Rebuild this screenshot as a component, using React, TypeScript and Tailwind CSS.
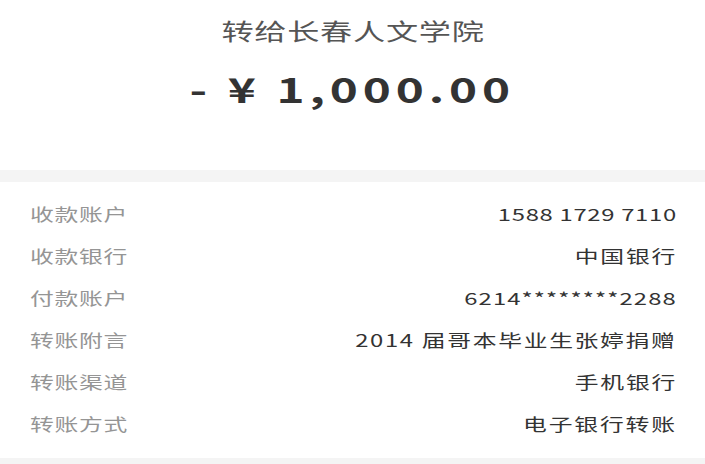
import React from "react";

const rows: [string, string, string][] = [
  ["收款账户", "1588 1729 7110", "tracking-[0.5px]"],
  ["收款银行", "中国银行", "tracking-[1.3px]"],
  ["付款账户", "6214********2288", "tracking-[0.8px]"],
  ["转账附言", "2014 届哥本毕业生张婷捐赠", "tracking-[1.2px]"],
  ["转账渠道", "手机银行", "tracking-[1.3px]"],
  ["转账方式", "电子银行转账", "tracking-[1.3px]"],
];

export default function App() {
  return (
    <div
      className="w-[705px] h-[464px] bg-[#f4f4f4] flex flex-col overflow-hidden"
      style={{ fontFamily: '"Noto Sans CJK SC", "Noto Sans", sans-serif' }}
    >
      <div className="h-[170px] bg-white flex flex-col items-center">
        <div className="mt-[14px] h-[32px] leading-[32px] text-[23px] tracking-[0.5px] text-[#555] inline-block scale-x-[1.4] origin-center">
          转给长春人文学院
        </div>
        <div className="mt-[20px] h-[46px] leading-[46px] text-[34px] font-semibold tracking-[3.5px] text-[#333] inline-block scale-x-[1.4] origin-center">
          - ¥ 1,000.00
        </div>
      </div>
      <div className="h-[12px] bg-[#f4f4f4]" />
      <div className="h-[276px] bg-white pl-[30px] pr-[28px] pt-[11px] flex flex-col">
        {rows.map(([k, v, t]) => (
          <div key={k} className="h-[42px] flex items-center justify-between">
            <span className="inline-block text-[17px] tracking-[0.5px] text-[#959595] scale-x-[1.4] origin-left">{k}</span>
            <span className={`inline-block text-[17px] ${t} text-[#333] scale-x-[1.4] origin-right`}>{v}</span>
          </div>
        ))}
      </div>
    </div>
  );
}
